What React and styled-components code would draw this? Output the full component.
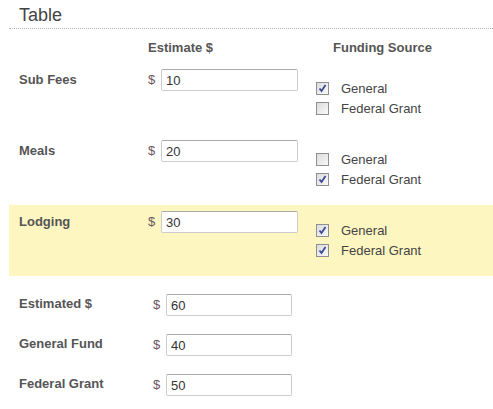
import React from "react"
import styled, { createGlobalStyle } from "styled-components"

const GlobalStyle = createGlobalStyle`
  body {
    margin: 0;
    background: #fff;
    font-family: "Liberation Sans", Arial, sans-serif;
    color: #444;
  }
`

const items = [
  { name: "Sub Fees", amount: "10", general: true, federal: false },
  { name: "Meals", amount: "20", general: false, federal: true },
  { name: "Lodging", amount: "30", general: true, federal: true, highlight: true }
]

const totals = [
  { name: "Estimated $", amount: "60" },
  { name: "General Fund", amount: "40" },
  { name: "Federal Grant", amount: "50" }
]

const Check = ({ checked }) => (
  <Box>
    {checked && (
      <svg width="9" height="9" viewBox="0 0 9 9">
        <path d="M1.5 4.5 L3.5 7 L7.5 1" fill="none" stroke="#3b4a94" strokeWidth="1.8" />
      </svg>
    )}
  </Box>
)

class App extends React.Component {
  render() {
    return (
      <Page>
        <GlobalStyle />
        <Title>Table</Title>
        <HeadRow>
          <span />
          <HeadCell>Estimate $</HeadCell>
          <HeadCell $pad={17}>Funding Source</HeadCell>
        </HeadRow>
        {items.map((it) => (
          <ItemRow key={it.name} $highlight={it.highlight}>
            <Label>{it.name}</Label>
            <Money>
              <Dollar>$</Dollar>
              <Input defaultValue={it.amount} $width={137} />
            </Money>
            <Sources>
              <Source>
                <Check checked={it.general} />
                General
              </Source>
              <Source>
                <Check checked={it.federal} />
                Federal Grant
              </Source>
            </Sources>
          </ItemRow>
        ))}
        <Totals>
          {totals.map((t) => (
            <TotalRow key={t.name}>
              <Label $top={2}>{t.name}</Label>
              <Money>
                <Dollar>$</Dollar>
                <Input defaultValue={t.amount} $width={126} />
              </Money>
            </TotalRow>
          ))}
        </Totals>
      </Page>
    )
  }
}

const Page = styled.div`
  padding-left: 9px;
  width: 484px;
`

const Title = styled.div`
  font-size: 18px;
  color: #444;
  padding: 5px 10px 3px;
  line-height: 20px;
  border-bottom: 1px dotted #b5b5b5;
`

const HeadRow = styled.div`
  display: grid;
  grid-template-columns: 139px 168px 1fr;
  height: 34px;
  padding-top: 11px;
  box-sizing: border-box;
`

const HeadCell = styled.div`
  font-size: 13px;
  font-weight: bold;
  color: #555;
  padding-left: ${(p) => p.$pad || 0}px;
`

const ItemRow = styled.div`
  display: grid;
  grid-template-columns: 139px 168px 1fr;
  height: 71px;
  box-sizing: border-box;
  padding-top: 6px;
  background: ${(p) => (p.$highlight ? "#fdf6c0" : "transparent")};
`

const Label = styled.div`
  padding-left: 10px;
  padding-top: ${(p) => (p.$top != null ? p.$top : 3)}px;
  font-size: 13px;
  font-weight: bold;
  color: #555;
  line-height: 15px;
`

const Money = styled.div`
  display: flex;
  align-items: flex-start;
`

const Dollar = styled.span`
  font-size: 13px;
  color: #6b5860;
  line-height: 22px;
  width: 13px;
`

const Input = styled.input`
  width: ${(p) => p.$width}px;
  height: 22px;
  box-sizing: border-box;
  border: 1px solid #ccc;
  border-top-color: #aaa;
  border-radius: 2px;
  padding: 0 4px;
  font-family: "Liberation Sans", Arial, sans-serif;
  font-size: 13px;
  color: #333;
  background: #fff;
  outline: none;
`

const Sources = styled.div`
  display: flex;
  flex-direction: column;
  gap: 5px;
  padding-top: 12px;
`

const Source = styled.label`
  display: flex;
  align-items: center;
  gap: 12px;
  font-size: 13px;
  color: #444;
  line-height: 15px;
`

const Box = styled.span`
  width: 13px;
  height: 13px;
  box-sizing: border-box;
  border: 1px solid #8f8f8f;
  background: linear-gradient(135deg, #dcdcdc, #f8f8f8);
  display: flex;
  align-items: center;
  justify-content: center;
`

const Totals = styled.div`
  padding-top: 18px;
`

const TotalRow = styled.div`
  display: grid;
  grid-template-columns: 144px 1fr;
  height: 40px;
`

export default App
